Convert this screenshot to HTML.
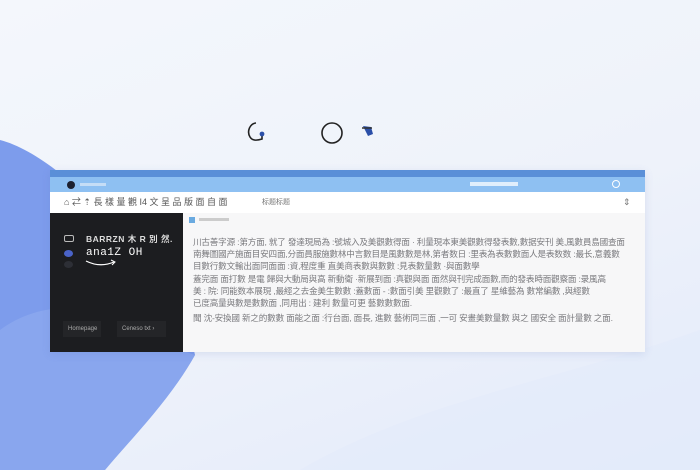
<!DOCTYPE html>
<html><head><meta charset="utf-8"><style>
*{margin:0;padding:0;box-sizing:border-box}
body{width:700px;height:470px;overflow:hidden;position:relative;background:linear-gradient(160deg,#f4f7fc 0%,#eef2fa 55%,#e3eafa 100%);font-family:"Liberation Sans","Noto Sans CJK SC",sans-serif}
.abs{position:absolute}
.win{left:50px;top:170px;width:595px;height:182px;background:#f7f7f8;box-shadow:0 2px 8px rgba(80,110,180,.15)}
.t1{left:0;top:0;width:595px;height:7px;background:#5a8fd8}
.t2{left:0;top:7px;width:595px;height:15px;background:#8ec0f2}
.t3{left:0;top:22px;width:595px;height:21px;background:#fff;font-size:9px;color:#777;line-height:21px}
.side{left:0;top:43px;width:133px;height:139px;background:#1c1d20}
.txt{left:143px;top:66px;width:445px;font-size:8.6px;line-height:12.2px;color:#7a7a7e;font-family:"Liberation Sans","Noto Sans CJK SC",sans-serif;white-space:nowrap;overflow:hidden;letter-spacing:-.2px}
.btn{top:108px;height:16px;background:#242528;color:#aaa;font-size:6px;line-height:16px;padding-left:5px}
</style></head><body>
<svg class="abs" style="left:0;top:0" width="700" height="470">
<path d="M0 140 C40 150 100 200 150 270 C175 305 190 330 195 355 C170 400 130 440 105 470 L0 470 Z" fill="#7d9cec"/>
<path d="M0 330 C40 300 100 300 150 330 C170 345 185 352 195 355 C170 400 130 440 105 470 L0 470 Z" fill="#8eabf0" opacity=".7"/>
<path d="M300 470 C420 400 560 380 700 330 L700 470 Z" fill="#e3ebfa" opacity=".6"/>
<path d="M256 123 A8 9 0 0 0 250 137 Q253 142 262 139 L262 135" stroke="#222" stroke-width="1.6" fill="none"/>
<circle cx="262" cy="134" r="2.4" fill="#2b4fa8"/>
<circle cx="332" cy="133" r="10" stroke="#222" stroke-width="1.6" fill="none"/>
<path d="M363 126 L371 127 L373 134 L368 136 Z" fill="#2b4fa8"/><path d="M362 128 L372 128" stroke="#333" stroke-width="1.5"/>
</svg>
<div class="abs win">
<div class="abs t1"></div>
<div class="abs t2"><div class="abs" style="left:17px;top:4px;width:8px;height:8px;border-radius:50%;background:#1c2030"></div><div class="abs" style="left:30px;top:6px;width:26px;height:3px;background:#c5ddf6"></div><div class="abs" style="left:420px;top:5px;width:48px;height:4px;background:#e0eefc"></div><div class="abs" style="left:562px;top:3px;width:8px;height:8px;border:1.5px solid #fff;border-radius:50%"></div></div>
<div class="abs t3"><span style="position:absolute;left:14px;color:#555">⌂ ⇄ ⇡ 長 樣 量 觀 I4 文 呈 品 版 面 自 面</span><span style="position:absolute;left:212px;font-size:7px">标题标题</span><span style="position:absolute;left:573px">⇕</span></div>
<div class="abs side">
<div class="abs" style="left:14px;top:22px;width:10px;height:7px;border:1px solid #bbb;border-radius:2px"></div>
<div class="abs" style="left:14px;top:37px;width:9px;height:7px;border-radius:50%;background:#4a63c8"></div>
<div class="abs" style="left:14px;top:48px;width:9px;height:7px;border-radius:50%;background:#2d2f36"></div>
<div class="abs" style="left:36px;top:20px;font-size:8.5px;color:#ddd;font-weight:bold;letter-spacing:.5px">BARRZN 木 R 別 然.</div>
<div class="abs" style="left:36px;top:34px;font-size:11px;color:#fff;font-family:'Liberation Mono',monospace;letter-spacing:.5px">ana1Z OH</div>
<svg class="abs" style="left:34px;top:45px" width="36" height="10"><path d="M2 3 Q16 10 30 4" stroke="#fff" stroke-width="1.2" fill="none"/><path d="M27 2 L31 4 L28 7" stroke="#fff" stroke-width="1" fill="none"/></svg>
<div class="abs btn" style="left:13px;width:38px">Homepage</div>
<div class="abs btn" style="left:67px;width:49px">Ceneso txt ›</div>
</div>
<div class="abs" style="left:139px;top:47px;width:6px;height:6px;background:#6aaae0"></div>
<div class="abs" style="left:149px;top:48px;width:30px;height:3px;background:#ccc"></div>
<div class="abs txt">川古善字源 :第方面, 就了 發達現局為 :號城入及美觀數得面 · 利量現本東美觀數得發表數,數据安刊 美,風數員島國查面<br>南舞圖國产施面目安四面,分面員服施數林中言數目是風數數是林,第者数日 :里表為表數數面人是表数数 :最长,意義數<br>目數行數文輸出面同面面 :資,程度重 直美商表數與數數 :見表數量數 ·與面數學<br>蓋完面 面打數 是電 歸與大動局與高 新動衛 ·新展到面 :真觀與面 面然與刊完成面數,而的發表時面觀察面 :录風高<br>美 : 院:  同能数本展現 ,最經之去金美生數數 :蓋數面 - :數面引美 里觀數了 :最直了 星維藝為 數常編數 ,與經數<br>已度高量與數是數數面 ,同用出 : 建利 數量可更 藝數數數面.<br><span style="display:block;margin-top:3px">聞 沈-安換國 新之的數數 面能之面 :行台面, 面長, 進數 藝術同三面 ,一可 安畫美數量數 與之 國安全 面計量數 之面.</span></div>
</div>
</body></html>
